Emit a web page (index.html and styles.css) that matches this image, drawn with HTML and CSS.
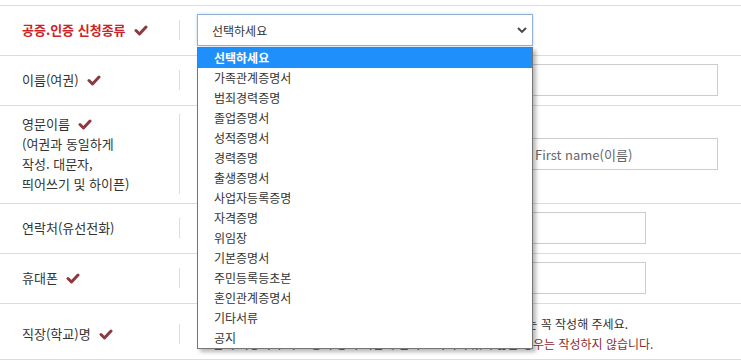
FILE: index.html
```html
<!DOCTYPE html>
<html lang="ko">
<head>
<meta charset="utf-8">
<title>신청서</title>
<link rel="stylesheet" href="styles.css">
</head>
<body>
<div class="form">
  <div class="row">
    <div class="th"><div class="lbl req">공증.인증 신청종류<svg class="chk" viewBox="0 0 14 11"><polyline points="2,5.5 5.5,9 12,2"/></svg></div></div>
    <div class="td">
      <div class="select-wrap">
        <div class="select"><span>선택하세요</span><svg class="chev" viewBox="0 0 10 6"><polyline points="1,1 5,5 9,1"/></svg></div>
        <ul class="options">
          <li class="on">선택하세요</li>
          <li>가족관계증명서</li>
          <li>범죄경력증명</li>
          <li>졸업증명서</li>
          <li>성적증명서</li>
          <li>경력증명</li>
          <li>출생증명서</li>
          <li>사업자등록증명</li>
          <li>자격증명</li>
          <li>위임장</li>
          <li>기본증명서</li>
          <li>주민등록등초본</li>
          <li>혼인관계증명서</li>
          <li>기타서류</li>
          <li>공지</li>
        </ul>
      </div>
    </div>
  </div>
  <div class="row">
    <div class="th"><div class="lbl">이름(여권)<svg class="chk" viewBox="0 0 14 11"><polyline points="2,5.5 5.5,9 12,2"/></svg></div></div>
    <div class="td"><input class="inp w-full" type="text"></div>
  </div>
  <div class="row">
    <div class="th"><div class="lbl">영문이름<svg class="chk" viewBox="0 0 14 11"><polyline points="2,5.5 5.5,9 12,2"/></svg><br>(여권과 동일하게<br>작성. 대문자,<br>띄어쓰기 및 하이픈)</div></div>
    <div class="td pair">
      <input class="inp w-last" type="text" placeholder="Last name(성)">
      <input class="inp w-first" type="text" placeholder="First name(이름)">
    </div>
  </div>
  <div class="row">
    <div class="th"><div class="lbl">연락처(유선전화)</div></div>
    <div class="td"><input class="inp w-mid" type="text"></div>
  </div>
  <div class="row">
    <div class="th"><div class="lbl">휴대폰<svg class="chk" viewBox="0 0 14 11"><polyline points="2,5.5 5.5,9 12,2"/></svg></div></div>
    <div class="td"><input class="inp w-mid" type="text"></div>
  </div>
  <div class="row last">
    <div class="th"><div class="lbl">직장(학교)명<svg class="chk" viewBox="0 0 14 11"><polyline points="2,5.5 5.5,9 12,2"/></svg></div></div>
    <div class="td notes">
      <p class="note">※ 현재 직장인은 직장명을, 학생은 학교명을 정확히 기재할 경우에는 꼭 작성해 주세요.</p>
      <p class="note warn">※ 현재 직장이나 학교 등의 공식 기관에 전혀 소속되어 있지 않은 경우는 작성하지 않습니다.</p>
    </div>
  </div>
</div>
</body>
</html>
```

FILE: styles.css
```css
* { box-sizing: border-box; }
html, body { margin: 0; padding: 0; background: #fff; }
body {
  font-family: "Noto Sans CJK KR", "Noto Sans", sans-serif;
  color: #333;
  width: 741px;
  height: 360px;
  overflow: hidden;
}
.form {
  margin-top: 5px;
  border-top: 1px solid #dcdcdc;
}
.row {
  display: grid;
  grid-template-columns: 180px 1fr;
  align-items: center;
  padding: 8px 0 9px;
  border-bottom: 1px solid #dcdcdc;
}
.row.last { padding: 10px 0 5px; }
.th {
  padding-left: 22px;
  display: flex;
}
.lbl {
  flex: 1;
  font-size: 13px;
  line-height: 20px;
  color: #333;
  border-right: 1px solid #dddddd;
  white-space: nowrap;
}
.lbl.req { color: #cc2229; font-weight: 700; }
.chk {
  width: 14px;
  height: 11px;
  margin-left: 8px;
  vertical-align: -1px;
  fill: none;
  stroke: #8c3a40;
  stroke-width: 3;
  stroke-linecap: round;
  stroke-linejoin: round;
}
.td { padding-left: 17px; position: relative; }
.select-wrap { position: relative; width: 336px; }
.select {
  height: 32px;
  border: 1px solid #8fb1d8;
  box-shadow: 0 0 3px rgba(120, 160, 210, 0.45);
  display: flex;
  align-items: center;
  justify-content: space-between;
  padding: 0 5px 0 14px;
  font-size: 12px;
  color: #333;
  background: #fff;
}
.chev {
  width: 10px;
  height: 6px;
  fill: none;
  stroke: #444;
  stroke-width: 1.8;
}
.options {
  position: absolute;
  left: 0;
  top: calc(100% + 1px);
  width: 336px;
  margin: 0;
  padding: 0;
  list-style: none;
  background: #fff;
  border: 1px solid #767676;
  box-shadow: 3px 3px 4px rgba(0, 0, 0, 0.28);
  z-index: 10;
}
.options li {
  height: 20px;
  line-height: 20px;
  padding-left: 16px;
  font-size: 12px;
  color: #333;
}
.options li.on {
  background: #1e8ffb;
  color: #fff;
  font-weight: 700;
}
.inp {
  display: block;
  height: 32px;
  border: 1px solid #cccccc;
  padding: 0 10px;
  font-family: "Noto Sans CJK KR", "Noto Sans", sans-serif;
  font-size: 13px;
  color: #333;
  background: #fff;
  outline: none;
}
.inp::placeholder { color: #666; }
.w-full { width: 521px; }
.w-mid { width: 449px; }
.pair { display: flex; gap: 8px; }
.w-last { width: 320px; }
.w-first { width: 193px; padding-left: 9px; }
.notes .note {
  margin: 0;
  font-size: 12px;
  line-height: 20px;
  color: #333;
  white-space: nowrap;
}
.notes .note.warn { color: #8a2b2e; }
```
